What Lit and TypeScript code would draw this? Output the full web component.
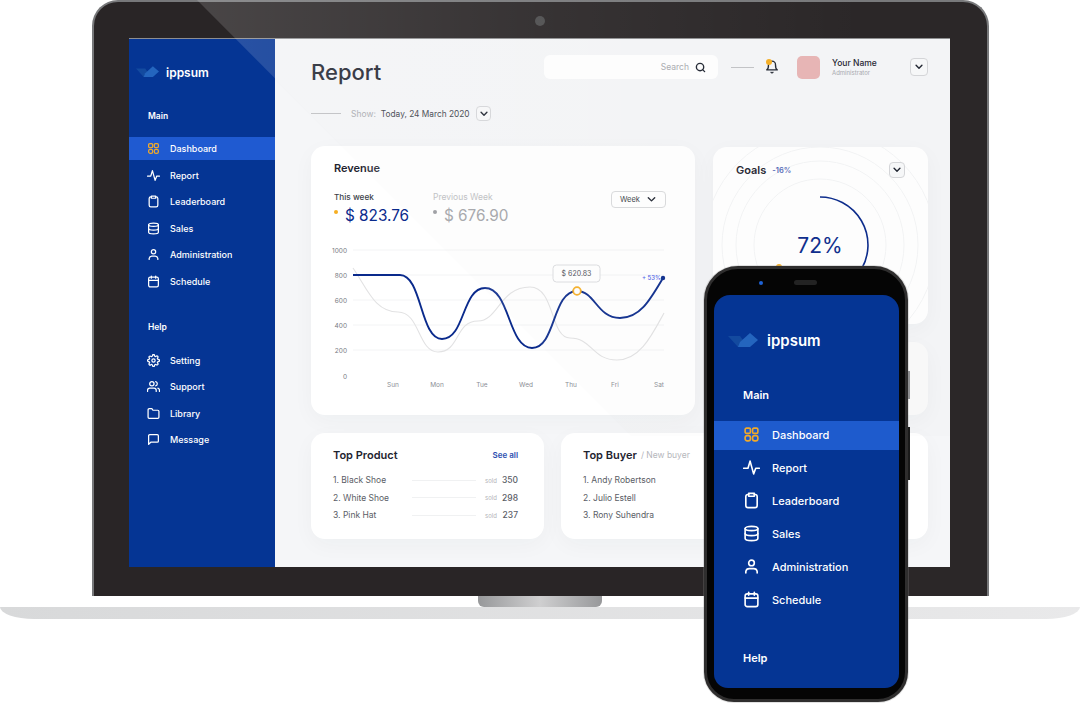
import { LitElement, html, css, svg } from "lit";
import { customElement } from "lit/decorators.js";

const icon = (body: unknown, cls = "") =>
  html`<svg class="icon ${cls}" viewBox="0 0 24 24" fill="none" stroke="currentColor" stroke-width="2.3" stroke-linecap="round" stroke-linejoin="round">${body}</svg>`;

const icons: Record<string, unknown> = {
  dashboard: svg`<rect x="3" y="3" width="7.5" height="7.5" rx="2"/><rect x="13.5" y="3" width="7.5" height="7.5" rx="2"/><rect x="3" y="13.5" width="7.5" height="7.5" rx="3"/><rect x="13.5" y="13.5" width="7.5" height="7.5" rx="3"/>`,
  report: svg`<polyline points="23 13 18 13 15 21 10 3 7 13 1 13"/>`,
  leaderboard: svg`<path d="M8 3.5H7a3 3 0 0 0-3 3V19a3 3 0 0 0 3 3h10a3 3 0 0 0 3-3V6.500a3 3 0 0 0-3-3h-1"/><path d="M8 2h8v4H8z"/>`,
  sales: svg`<ellipse cx="12" cy="5" rx="9" ry="3"/><path d="M21 12c0 1.66-4 3-9 3s-9-1.34-9-3"/><path d="M3 5v14c0 1.66 4 3 9 3s9-1.34 9-3V5"/>`,
  admin: svg`<circle cx="12" cy="7" r="4"/><path d="M4 21v-2a5 5 0 0 1 5-4h6a5 5 0 0 1 5 4v2"/>`,
  schedule: svg`<rect x="3" y="4" width="18" height="18" rx="3"/><line x1="16" y1="2" x2="16" y2="6"/><line x1="8" y1="2" x2="8" y2="6"/><line x1="3" y1="10" x2="21" y2="10"/>`,
  setting: svg`<circle cx="12" cy="12" r="3"/><path d="M19.4 15a1.65 1.65 0 0 0 .33 1.82l.06.06a2 2 0 0 1 0 2.83 2 2 0 0 1-2.83 0l-.06-.06a1.65 1.65 0 0 0-1.82-.33 1.65 1.65 0 0 0-1 1.51V21a2 2 0 0 1-2 2 2 2 0 0 1-2-2v-.09A1.65 1.65 0 0 0 9 19.4a1.65 1.65 0 0 0-1.82.33l-.06.06a2 2 0 0 1-2.83 0 2 2 0 0 1 0-2.83l.06-.06a1.65 1.65 0 0 0 .33-1.82 1.65 1.65 0 0 0-1.51-1H3a2 2 0 0 1-2-2 2 2 0 0 1 2-2h.09A1.65 1.65 0 0 0 4.6 9a1.65 1.65 0 0 0-.33-1.82l-.06-.06a2 2 0 0 1 0-2.83 2 2 0 0 1 2.83 0l.06.06a1.65 1.65 0 0 0 1.82.33H9a1.65 1.65 0 0 0 1-1.51V3a2 2 0 0 1 2-2 2 2 0 0 1 2 2v.09a1.65 1.65 0 0 0 1 1.51 1.65 1.65 0 0 0 1.82-.33l.06-.06a2 2 0 0 1 2.83 0 2 2 0 0 1 0 2.83l-.06.06a1.65 1.65 0 0 0-.33 1.82V9a1.65 1.65 0 0 0 1.51 1H21a2 2 0 0 1 2 2 2 2 0 0 1-2 2h-.09a1.65 1.65 0 0 0-1.51 1z"/>`,
  support: svg`<path d="M17 21v-2a4 4 0 0 0-4-4H5a4 4 0 0 0-4 4v2"/><circle cx="9" cy="7" r="4"/><path d="M23 21v-2a4 4 0 0 0-3-3.87"/><path d="M16 3.13a4 4 0 0 1 0 7.75"/>`,
  library: svg`<path d="M22 19a2 2 0 0 1-2 2H4a2 2 0 0 1-2-2V5a2 2 0 0 1 2-2h5l2 3h9a2 2 0 0 1 2 2z"/>`,
  message: svg`<path d="M21 15a2 2 0 0 1-2 2H7l-4 4V5a2 2 0 0 1 2-2h14a2 2 0 0 1 2 2z"/>`,
  search: svg`<circle cx="11" cy="11" r="8"/><line x1="21" y1="21" x2="16.65" y2="16.65"/>`,
  bell: svg`<path d="M18 8a6 6 0 0 0-12 0c0 7-3 9-3 9h18s-3-2-3-9"/><path d="M13.7 21a2 2 0 0 1-3.4 0"/>`,
  chevron: svg`<polyline points="5 8 12 15 19 8"/>`,
};

const logo = html`<svg class="logo" viewBox="0 0 30 15">
  <polygon points="0,3 12,3 20,14 10,14" fill="#134a9f" />
  <polygon points="12,9 22,0 30,7 22,14 10,14" fill="#2465be" />
</svg>`;

const mainMenu = [
  ["dashboard", "Dashboard"],
  ["report", "Report"],
  ["leaderboard", "Leaderboard"],
  ["sales", "Sales"],
  ["admin", "Administration"],
  ["schedule", "Schedule"],
];
const helpMenu = [
  ["setting", "Setting"],
  ["support", "Support"],
  ["library", "Library"],
  ["message", "Message"],
];

const products = [
  ["1. Black Shoe", "350"],
  ["2. White Shoe", "298"],
  ["3. Pink Hat", "237"],
];
const buyers = ["1. Andy Robertson", "2. Julio Estell", "3. Rony Suhendra"];

const yTicks = [
  ["1000", 250],
  ["800", 275],
  ["600", 300],
  ["400", 325],
  ["200", 350],
  ["0", 376],
] as const;
const days = [
  ["Sun", 393],
  ["Mon", 437],
  ["Tue", 482],
  ["Wed", 526],
  ["Thu", 571],
  ["Fri", 615],
  ["Sat", 659],
] as const;

@customElement("app-root")
export class AppRoot extends LitElement {
  static styles = css`
    :host {
      display: block;
      position: relative;
      width: 1080px;
      height: 705px;
      overflow: hidden;
      background: #fff;
      font-family: Inter, "Noto Sans", sans-serif;
      color: #1f2430;
    }
    .icon {
      display: block;
      flex: none;
    }

    /* laptop */
    .laptop {
      box-sizing: border-box;
      width: 897px;
      height: 596px;
      margin-left: 92px;
      padding: 37px 37px 0 35px;
      background: #292526;
      border: 2px solid #77787a;
      border-bottom: 0;
      border-radius: 26px 26px 0 0;
      position: relative;
    }
    .camera {
      position: absolute;
      left: 441px;
      top: 14px;
      width: 10px;
      height: 10px;
      border-radius: 50%;
      background: #4c4c4d;
    }
    .screen {
      display: flex;
      width: 821px;
      height: 528px;
      background: #f5f6f8;
      box-shadow: 0 -1px 0 #8d8e90;
      overflow: hidden;
    }
    .hinge {
      width: 124px;
      height: 11px;
      margin-left: 478px;
      border-radius: 0 0 6px 6px;
      background: linear-gradient(90deg, #97989a, #cfcfd0 50%, #97989a);
    }
    .base {
      height: 12px;
      background: linear-gradient(90deg, #d8d9da, #e9e9ea);
      border-radius: 0 0 34px 34px / 0 0 12px 12px;
    }
    .glare {
      position: absolute;
      left: 0;
      top: 0;
      width: 1080px;
      height: 705px;
      pointer-events: none;
    }

    /* sidebar */
    .sidebar {
      flex: none;
      width: 146px;
      box-sizing: border-box;
      padding-top: 23px;
      background: #053594;
      color: #fff;
    }
    .brand {
      display: flex;
      align-items: center;
      gap: 7px;
      height: 20px;
      padding-left: 7px;
      font-size: 12px;
      font-weight: 600;
    }
    .brand .logo {
      width: 23px;
      height: 12px;
    }
    .heading {
      margin: 27px 0 14px 19px;
      font-size: 8.5px;
      line-height: 14px;
      font-weight: 600;
    }
    .heading.help {
      margin: 27.5px 0 14.5px 19px;
    }
    .menu {
      display: flex;
      flex-direction: column;
      gap: 3.5px;
    }
    .row {
      display: flex;
      align-items: center;
      gap: 10px;
      height: 23px;
      padding-left: 18px;
      font-size: 9px;
      font-weight: 500;
    }
    .row .icon {
      width: 13px;
      height: 13px;
    }
    .row.active {
      background: #1f5ad1;
    }
    .row.active .icon {
      color: #f0a92a;
    }

    /* main column */
    .main {
      flex: 1;
      padding: 16px 22px 0 36px;
      min-width: 0;
    }
    .topbar {
      display: flex;
      align-items: flex-start;
      height: 24px;
    }
    .title {
      margin-top: 5px;
      font-size: 22px;
      line-height: 24px;
      font-weight: 500;
    }
    .search {
      display: flex;
      align-items: center;
      justify-content: flex-end;
      gap: 6px;
      box-sizing: border-box;
      width: 174px;
      height: 24px;
      margin-left: auto;
      padding-right: 12px;
      background: #fff;
      border-radius: 6px;
      font-size: 8.5px;
      color: #a9abb0;
    }
    .search .icon {
      width: 11px;
      height: 11px;
      color: #1f2430;
      stroke-width: 3;
    }
    .dash {
      width: 23px;
      height: 1px;
      margin: 12px 0 0 13px;
      background: #c2c3c6;
    }
    .bell {
      position: relative;
      margin: 5px 0 0 11px;
    }
    .bell .icon {
      width: 14px;
      height: 14px;
    }
    .bell i {
      position: absolute;
      left: 1px;
      top: -1px;
      width: 6px;
      height: 6px;
      border-radius: 50%;
      background: #f6ae22;
    }
    .avatar {
      width: 23px;
      height: 23px;
      margin: 1px 0 0 18px;
      border-radius: 5px;
      background: #e9b5b5;
    }
    .who {
      margin: 2px 0 0 12px;
      width: 78px;
      font-size: 8.5px;
      line-height: 12px;
      font-weight: 500;
    }
    .who small {
      display: block;
      font-size: 6px;
      line-height: 8px;
      font-weight: 400;
      color: #a9abb0;
    }
    .chev {
      display: flex;
      align-items: center;
      justify-content: center;
      box-sizing: border-box;
      width: 18px;
      height: 18px;
      border: 1px solid #d6d7da;
      border-radius: 4px;
      background: #f8f9fa;
    }
    .chev .icon {
      width: 10px;
      height: 10px;
      stroke-width: 3.4;
    }
    .topbar .chev {
      margin-top: 3px;
    }
    .show {
      display: flex;
      align-items: center;
      height: 15px;
      margin-top: 27px;
      font-size: 8.5px;
      color: #a9abb0;
    }
    .show .rule {
      width: 30px;
      height: 1px;
      margin-right: 10px;
      background: #bfc0c3;
    }
    .show b {
      margin: 0 7px 0 5px;
      font-size: 8.3px;
      font-weight: 400;
      color: #3b3f49;
    }
    .show .chev {
      width: 15px;
      height: 15px;
    }
    .show .chev .icon {
      color: #1f2430;
    }

    .grid {
      display: flex;
      gap: 18px;
      margin-top: 25px;
    }
    .card {
      background: #fff;
      border-radius: 14px;
      box-shadow: 0 6px 22px rgba(40, 50, 70, 0.035);
    }
    .revenue {
      flex: none;
      width: 384px;
      height: 269px;
      box-sizing: border-box;
      padding-top: 15px;
    }
    .card-title {
      font-size: 11px;
      line-height: 14px;
      font-weight: 600;
    }
    .revenue .card-title {
      padding-left: 23px;
    }
    .stats {
      display: flex;
      align-items: flex-start;
      margin-top: 15px;
      padding: 0 29px 0 23px;
    }
    .stat {
      width: 99px;
      font-size: 8.2px;
      line-height: 14px;
      font-weight: 500;
      color: #3b3f49;
    }
    .stat.prev {
      font-size: 8.5px;
      color: #bdbec2;
      font-weight: 400;
    }
    .amount {
      display: flex;
      gap: 7px;
      margin-top: 2px;
      font-size: 15.3px;
      line-height: 20px;
      font-weight: 400;
      color: #0a2a8c;
    }
    .amount i {
      flex: none;
      width: 4px;
      height: 4px;
      margin-top: 4px;
      border-radius: 50%;
      background: #f6ae22;
    }
    .prev .amount {
      color: #a2a3a8;
    }
    .prev .amount i {
      background: #98999e;
    }
    .week {
      display: flex;
      align-items: center;
      justify-content: center;
      gap: 6px;
      box-sizing: border-box;
      width: 55px;
      height: 17px;
      margin: 1px 0 0 auto;
      border: 1px solid #d9dadc;
      border-radius: 4px;
      font-size: 7.5px;
      color: #3b3f49;
    }
    .week .icon {
      width: 11px;
      height: 11px;
      color: #1f2430;
      stroke-width: 3;
    }
    .chart {
      display: block;
      width: 384px;
      height: 155px;
      margin-top: 14px;
    }
    .chart text {
      font-family: Inter, "Noto Sans", sans-serif;
    }
    .side {
      flex: 1;
      display: flex;
      flex-direction: column;
      gap: 18px;
    }
    .goals {
      position: relative;
      height: 177px;
      margin-top: 1px;
      overflow: hidden;
    }
    .goals > svg {
      position: absolute;
      inset: 0;
      width: 100%;
      height: 100%;
    }
    .goals text {
      font-family: Inter, "Noto Sans", sans-serif;
    }
    .goals-head {
      position: relative;
      display: flex;
      align-items: center;
      gap: 6px;
      padding: 15px 23px 0;
    }
    .goals-head span {
      font-size: 7.5px;
      font-weight: 600;
      color: #5569b8;
    }
    .goals-head .chev {
      width: 16px;
      height: 16px;
      margin-left: auto;
    }
    .blank {
      height: 73px;
      background: #fafafa;
    }
    .bottom {
      display: flex;
      gap: 17px;
      margin-top: 18px;
    }
    .list-card {
      box-sizing: border-box;
      height: 106px;
      padding: 15px 26px 0 22px;
    }
    .products {
      flex: none;
      width: 233px;
    }
    .buyers {
      flex: 1;
    }
    .list-head {
      display: flex;
      align-items: center;
      gap: 4px;
      margin-bottom: 9.500px;
    }
    .list-head a {
      margin-left: auto;
      font-size: 8px;
      font-weight: 600;
      color: #2d4fb0;
    }
    .list-head span {
      font-size: 8.5px;
      color: #b3b4b9;
    }
    .item {
      display: flex;
      align-items: center;
      height: 17.5px;
      font-size: 8.5px;
      color: #5a5d66;
    }
    .item .name {
      width: 79px;
    }
    .item .bar {
      width: 64px;
      height: 1px;
      background: #f0f1f2;
    }
    .item small {
      margin-left: 9px;
      font-size: 6px;
      color: #b3b4b9;
    }
    .item b {
      margin-left: auto;
      font-weight: 500;
    }

    /* phone */
    .phone {
      position: absolute;
      left: 704px;
      top: 266px;
      box-sizing: border-box;
      width: 204px;
      height: 436px;
      padding: 26px 6px 0 7px;
      background: #050505;
      border: 3px solid #2f2e2e;
      border-radius: 34px 34px 30px 30px;
      box-shadow: 0 0 0 1px #8f8f8f44;
    }
    .phone .lens {
      position: absolute;
      left: 52px;
      top: 12px;
      width: 4px;
      height: 4px;
      border-radius: 50%;
      background: #1e63d6;
    }
    .phone .speaker {
      position: absolute;
      left: 87px;
      top: 11px;
      width: 23px;
      height: 5px;
      border-radius: 3px;
      background: #232323;
    }
    .phone .btn {
      position: absolute;
      right: -5px;
      width: 2px;
    }
    .phone .btn.a {
      top: 102px;
      height: 28px;
      background: #8f9092;
    }
    .phone .btn.b {
      top: 158px;
      height: 53px;
      background: #1b1b1b;
    }
    .phone-screen {
      height: 393px;
      box-sizing: border-box;
      padding-top: 35px;
      background: #053594;
      border-radius: 16px 16px 14px 14px;
      color: #fff;
      overflow: hidden;
    }
    .phone-screen .brand {
      gap: 9px;
      padding-left: 14px;
      font-size: 15px;
    }
    .phone-screen .brand .logo {
      width: 30px;
      height: 15px;
    }
    .phone-screen .heading {
      margin: 37px 0 18px 29px;
      font-size: 11px;
      line-height: 16px;
    }
    .phone-screen .heading.help {
      margin-top: 34.5px;
    }
    .phone-screen .menu {
      gap: 4px;
    }
    .phone-screen .row {
      box-sizing: border-box;
      gap: 12px;
      height: 29px;
      padding: 0 0 2px 29px;
      font-size: 11px;
    }
    .phone-screen .row .icon {
      width: 17px;
      height: 17px;
    }
    .phone-screen .row.active {
      background: #1e5bcd;
    }
  `;

  private renderRows(items: string[][]) {
    return html`<div class="menu">
      ${items.map(
        ([key, label]) =>
          html`<div class="row ${key === "dashboard" ? "active" : ""}">
            ${icon(icons[key])}<span>${label}</span>
          </div>`,
      )}
    </div>`;
  }

  private renderChart() {
    return html`<svg class="chart" viewBox="311 240 384 155">
      ${yTicks.map(
        ([label, y]) => svg`
          ${y < 376 ? svg`<line x1="353" x2="664" y1=${y} y2=${y} stroke="#f3f4f5" />` : ""}
          <text x="347" y=${y + 2.5} font-size="6.5" text-anchor="end" fill="#777a81">${label}</text>`,
      )}
      ${days.map(
        ([d, x]) =>
          svg`<text x=${x} y="387" font-size="6.5" text-anchor="middle" fill="#8b8e95">${d}</text>`,
      )}
      <path
        d="M353 268C368 290 375 312 398 312C420 312 418 352 438 352C460 352 455 321 478 321C498 321 500 287 530 287C555 287 550 338 570 338C592 338 592 360 617 360C640 360 652 335 664 313"
        fill="none"
        stroke="#e2e2e3"
        stroke-width="1.1"
      />
      <path
        d="M353 275H400C422 275 420 339 442 339C465 339 462 288 485 288C510 288 508 348 532 348C556 348 552 291 577 291C595 291 597 318 620 318C640 318 650 300 663 278"
        fill="none"
        stroke="#0a2a8c"
        stroke-width="1.9"
      />
      <circle cx="663" cy="278" r="2.2" fill="#0a2a8c" />
      <text x="642" y="280" font-size="6" font-weight="500" fill="#4a5ee8">+ 53%</text>
      <circle cx="577" cy="291" r="3.8" fill="#fff" stroke="#f6ae22" stroke-width="1.8" />
      <rect x="553" y="265" width="47" height="17" rx="3.5" fill="#fff" stroke="#dcdde0" />
      <text x="576.5" y="276" font-size="7" text-anchor="middle" fill="#4a4d55">$ 620.83</text>
    </svg>`;
  }

  private renderGoals() {
    return html`<svg viewBox="713 147 215 177">
      ${[66, 84, 98, 116].map(
        (r) => svg`<circle cx="820" cy="245" r=${r} fill="none" stroke="#f4f5f6" />`,
      )}
      <path
        d="M820 197A48 48 0 1 1 779 270"
        fill="none"
        stroke="#0a2a8c"
        stroke-width="1.6"
      />
      <circle cx="779" cy="267" r="3" fill="#f6ae22" />
      <text x="820" y="253" font-size="21" text-anchor="middle" fill="#0a2a8c">72%</text>
    </svg>`;
  }

  render() {
    return html`
      <div class="laptop">
        <div class="camera"></div>
        <div class="screen">
          <aside class="sidebar">
            <div class="brand">${logo}<span>ippsum</span></div>
            <div class="heading">Main</div>
            ${this.renderRows(mainMenu)}
            <div class="heading help">Help</div>
            ${this.renderRows(helpMenu)}
          </aside>
          <section class="main">
            <div class="topbar">
              <div class="title">Report</div>
              <div class="search"><span>Search</span>${icon(icons.search)}</div>
              <div class="dash"></div>
              <div class="bell">${icon(icons.bell)}<i></i></div>
              <div class="avatar"></div>
              <div class="who">Your Name<small>Administrator</small></div>
              <div class="chev">${icon(icons.chevron)}</div>
            </div>
            <div class="show">
              <div class="rule"></div>
              Show:<b>Today, 24 March 2020</b>
              <div class="chev">${icon(icons.chevron)}</div>
            </div>
            <div class="grid">
              <div class="card revenue">
                <div class="card-title">Revenue</div>
                <div class="stats">
                  <div class="stat">
                    This week
                    <div class="amount"><i></i>$ 823.76</div>
                  </div>
                  <div class="stat prev">
                    Previous Week
                    <div class="amount"><i></i>$ 676.90</div>
                  </div>
                  <div class="week">Week ${icon(icons.chevron)}</div>
                </div>
                ${this.renderChart()}
              </div>
              <div class="side">
                <div class="card goals">
                  ${this.renderGoals()}
                  <div class="goals-head">
                    <div class="card-title">Goals</div>
                    <span>-16%</span>
                    <div class="chev">${icon(icons.chevron)}</div>
                  </div>
                </div>
                <div class="card blank"></div>
              </div>
            </div>
            <div class="bottom">
              <div class="card list-card products">
                <div class="list-head">
                  <div class="card-title">Top Product</div>
                  <a>See all</a>
                </div>
                ${products.map(
                  ([name, sold]) =>
                    html`<div class="item">
                      <span class="name">${name}</span>
                      <span class="bar"></span>
                      <small>sold</small>
                      <b>${sold}</b>
                    </div>`,
                )}
              </div>
              <div class="card list-card buyers">
                <div class="list-head">
                  <div class="card-title">Top Buyer</div>
                  <span>/ New buyer</span>
                </div>
                ${buyers.map((b) => html`<div class="item">${b}</div>`)}
              </div>
            </div>
          </section>
        </div>
      </div>
      <div class="hinge"></div>
      <div class="base"></div>

      <svg class="glare" viewBox="0 0 1080 705">
        <defs>
          <linearGradient id="sheen" gradientUnits="userSpaceOnUse" x1="197" y1="0" x2="860" y2="0">
            <stop offset="0" stop-color="#fff" stop-opacity="0.15" />
            <stop offset="0.55" stop-color="#fff" stop-opacity="0.06" />
            <stop offset="1" stop-color="#fff" stop-opacity="0.01" />
          </linearGradient>
        </defs>
        <polygon points="197,0 791,596 987,596 987,0" fill="url(#sheen)" />
        <polygon points="275,80 631,436 950,436 950,39 275,39" fill="#6b6f78" opacity="0.015" />
      </svg>

      <div class="phone">
        <div class="lens"></div>
        <div class="speaker"></div>
        <div class="btn a"></div>
        <div class="btn b"></div>
        <div class="phone-screen">
          <div class="brand">${logo}<span>ippsum</span></div>
          <div class="heading">Main</div>
          ${this.renderRows(mainMenu)}
          <div class="heading help">Help</div>
        </div>
      </div>
    `;
  }
}
